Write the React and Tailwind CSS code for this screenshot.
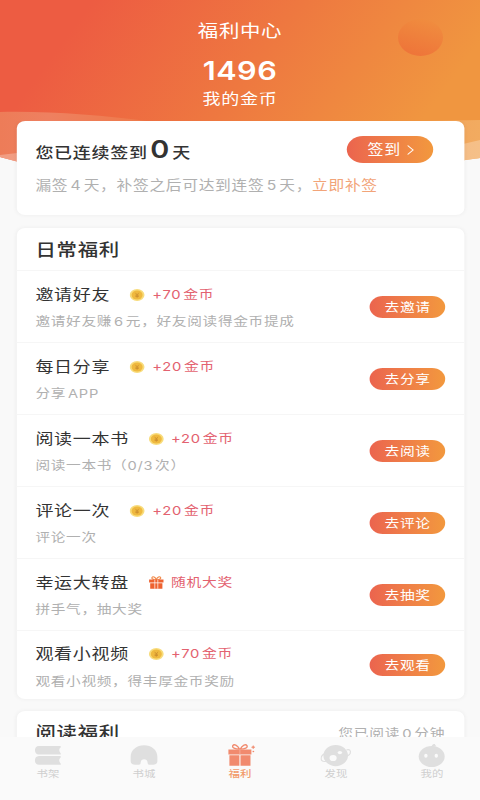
import React from 'react';

const tasks = [
  { title: '邀请好友', reward: '+70 金币', desc: '邀请好友赚 6 元，好友阅读得金币提成', action: '去邀请' },
  { title: '每日分享', reward: '+20 金币', desc: '分享 APP', action: '去分享' },
  { title: '阅读一本书', reward: '+20 金币', desc: '阅读一本书（0/3 次）', action: '去阅读' },
  { title: '评论一次', reward: '+20 金币', desc: '评论一次', action: '去评论' },
  { title: '幸运大转盘', reward: '随机大奖', desc: '拼手气，抽大奖', action: '去抽奖', gift: true },
  { title: '观看小视频', reward: '+70 金币', desc: '观看小视频，得丰厚金币奖励', action: '去观看' },
];

const CoinIcon = () => (
  <svg className="w-[12.5px] h-[12px] shrink-0" viewBox="0 0 15 12" preserveAspectRatio="none">
    <ellipse cx="7.5" cy="6" rx="7.4" ry="5.9" fill="#f8dc7c" />
    <ellipse cx="7.5" cy="6" rx="5.5" ry="4.5" fill="#efb93f" />
    <path d="M5.8 3.8l1.7 2 1.7-2M7.5 5.8v3M5.8 6.2h3.4M5.8 7.5h3.4" fill="none" stroke="#c98a2c" strokeWidth=".7" />
  </svg>
);

const SmallGift = () => (
  <svg className="w-[12.5px] h-[13px] shrink-0" viewBox="0 0 15 13" preserveAspectRatio="none">
    <path d="M7.5 3.6C6.5 1 4 0 3.2 1.4 2.6 2.7 4 3.6 7.5 3.6zM7.5 3.6C8.500 1 11 0 11.800 1.400 12.400 2.700 11 3.600 7.500 3.600z" fill="none" stroke="#f28a4a" strokeWidth="1.1" />
    <path d="M.3 3.600h14.400v3H.3zM1.400 7.200h12.200v5.500H1.400z" fill="#ee6230" />
    <path d="M6 3.600v9.200M9 3.600v9.200" stroke="#fff" strokeWidth=".7" />
  </svg>
);

const tabs = [
  {
    label: '书架',
    icon: (
      <path d="M6.500 4H27.500C29 4 28.600 5.200 27.600 6 26.600 7.200 26.600 9 27.700 10.500 28.600 11.500 29 12.500 27.500 12.500H6.500C1.200 12.500 1.200 4 6.500 4zM6.500 14H27.500C29 14 28.600 15.200 27.600 16.200 26.400 17.700 26.600 19.200 27.700 20.700 28.600 21.700 29 22.800 27.500 22.800H6.500C1.200 22.800 1.200 14 6.500 14z" fill="#dfdfdf" />
    ),
  },
  {
    label: '书城',
    icon: (
      <path d="M2.300 14.500C2.300 8 8.500 3.200 15.700 3.200S29 8 29 14.500V19C29 21.500 27.200 22.800 24.800 22.800H21C19.600 22.800 19.400 22 19.200 20.600 19 18.300 17.600 17.300 15.700 17.300S12.500 18.300 12.300 20.600C12.100 22 11.800 22.800 10.400 22.800H6.500C4 22.800 2.300 21.500 2.300 19z" fill="#dfdfdf" />
    ),
  },
  {
    label: '福利',
    active: true,
    icon: (
      <g fill="#f18a6e">
        <path d="M15.300 7.200C13 3 9.600 1.700 8.400 3.600 7.400 5.600 10.400 7.200 15.300 7.200zM15.700 7.200C18 3 21.400 1.700 22.600 3.600 23.600 5.600 20.600 7.200 15.700 7.200z" fill="none" stroke="#f18a6e" strokeWidth="1.300" />
        <path d="M4 7.500h23v4.900H4zM5 13.300h10v10.500H5zM16.100 13.300h10v10.500h-10z" />
        <path d="M15.500 7.500v5" stroke="#f8c0b0" strokeWidth=".6" />
        <path d="M28.800 3.400l.6 1.200 1.300.6-1.300.6-.6 1.200-.6-1.200-1.300-.6 1.300-.6zM28.400 9h1.200v1h-1.200z" stroke="#f18a6e" strokeWidth=".3" />
      </g>
    ),
  },
  {
    label: '发现',
    icon: (
      <g>
        <path d="M4.500 11.500C-.5 14-.5 19.500 4 19.500 12 19.500 28 15.500 29.800 11.500 30.800 8.500 29 6.800 26 8" fill="none" stroke="#dfdfdf" strokeWidth="1.200" />
        <ellipse cx="15.300" cy="13.600" rx="12.300" ry="10.600" fill="#dfdfdf" />
        <ellipse cx="12.700" cy="16" rx="3.600" ry="3.100" fill="#fafafa" />
        <ellipse cx="19.500" cy="10.600" rx="2.200" ry="1.700" fill="#fafafa" />
      </g>
    ),
  },
  {
    label: '我的',
    icon: (
      <g>
        <path d="M15.500 5C16 3.400 17 2.200 18 2.600L17.200 4 19.600 3.800" fill="none" stroke="#dfdfdf" strokeWidth="1.200" />
        <ellipse cx="15.300" cy="14.500" rx="13" ry="10.600" fill="#dfdfdf" />
        <ellipse cx="9.500" cy="13.800" rx="1.700" ry="2" fill="#fafafa" />
        <ellipse cx="19.900" cy="13.800" rx="1.700" ry="2" fill="#fafafa" />
      </g>
    ),
  },
];

const HeaderBackground = () => (
  <svg className="absolute inset-x-0 top-0 w-full h-[165px]" viewBox="0 0 480 165" preserveAspectRatio="none">
    <defs>
      <linearGradient id="sky" gradientUnits="userSpaceOnUse" x1="75" y1="25" x2="345" y2="225">
        <stop offset="0" stopColor="#ed5c42" />
        <stop offset=".5" stopColor="#ee7840" />
        <stop offset="1" stopColor="#f09640" />
      </linearGradient>
      <linearGradient id="ball" x1=".35" y1="1" x2=".75" y2="0">
        <stop offset="0" stopColor="#ee7439" />
        <stop offset="1" stopColor="#f08d3f" />
      </linearGradient>
      <linearGradient id="wave" x1="0" y1="0" x2="1" y2="0">
        <stop offset="0" stopColor="#ed7c58" />
        <stop offset=".1" stopColor="#ee8060" />
        <stop offset=".3" stopColor="#ee7a4a" />
        <stop offset="1" stopColor="#f2ab60" />
      </linearGradient>
    </defs>
    <path d="M0 0H480V158L430 165H30L0 157z" fill="url(#sky)" />
    <ellipse cx="420.500" cy="37.500" rx="22.500" ry="18.500" fill="url(#ball)" />
    <path d="M0 112C50 111 100 115 150 121.500H400L480 120V158L430 165H30L0 157z" fill="url(#wave)" />
    <path d="M0 155L17 153V162L0 157zM463 144L480 140V158L463 162z" fill="#fff" opacity=".25" />
  </svg>
);

const App = () => {
  return (
    <div className="w-[480px] h-[800px] overflow-hidden bg-[#f9f9f9]" lang="zh-CN">
      {/* the page is 400 units wide and stretched to fill the screen */}
      <div className="relative flex flex-col w-[400px] h-[800px] overflow-hidden origin-left scale-x-[1.2] tracking-[0.6px] [word-spacing:-2.4px] font-['Inter','Noto_Sans_CJK_SC',sans-serif]">
        <HeaderBackground />

        <header className="relative h-[121px] shrink-0 pt-[19px] flex flex-col items-center text-white">
          <h1 className="text-[17px] leading-[24px]">福利中心</h1>
          <div className="mt-[13px] text-[25.5px] leading-[30px] font-semibold tracking-[0.4px]">1496</div>
          <div className="mt-[3px] text-[15px] leading-[20px]">我的金币</div>
        </header>

        <main className="relative flex-1 min-h-0 overflow-hidden px-[13.5px]">
          <section className="h-[94px] rounded-[7px] bg-white shadow-[0_0_4px_rgba(0,0,0,0.05)] pl-4 pr-[25.5px]">
            <div className="flex items-center justify-between pt-[15px] h-[42px]">
              <div className="flex items-baseline pt-[3px] text-[15px] leading-[26px] font-medium text-[#333]">
                您已连续签到
                <span className="mx-[2px] text-[24px] font-semibold">0</span>
                天
              </div>
              <button type="button" className="flex items-center justify-center gap-[5px] w-[72.5px] h-[27px] rounded-full bg-linear-to-r from-[#eb644e] to-[#f2983d] pl-[2px] text-[13.3px] text-white">
                签到
                <svg className="w-[6px] h-[10px]" viewBox="0 0 6 10">
                  <path d="M.7.500L5.200 5 .7 9.500" fill="none" stroke="#fff" />
                </svg>
              </button>
            </div>
            <p className="mt-[12px] text-[13.1px] leading-[20px] text-[#b0b0b0] whitespace-nowrap">
              漏签 4 天，补签之后可达到连签 5 天，<span className="text-[#f2a479]">立即补签</span>
            </p>
          </section>

          <section className="mt-[13px] h-[471px] rounded-[7px] bg-white shadow-[0_0_4px_rgba(0,0,0,0.05)]">
            <h2 className="h-[43px] pl-4 pt-px text-[17px] leading-[43px] font-medium text-[#333] border-b border-[#f6f6f6]">日常福利</h2>
            {tasks.map(({ title, reward, desc, action, gift }) => (
              <div key={title} className="group flex items-center justify-between h-[72px] pl-4 pr-[15.3px] border-b border-[#f6f6f6] last:h-[68px] last:border-0">
                <div className="pt-[3px] group-last:pt-[5px]">
                  <div className="flex items-center h-[26px] whitespace-nowrap">
                    <span className="text-[15px] text-[#333]">{title}</span>
                    <span className="flex w-[12.5px] ml-[16.5px] mr-[6px] mb-px">{gift ? <SmallGift /> : <CoinIcon />}</span>
                    <span className="text-[12.3px] text-[#e36270]">{reward}</span>
                  </div>
                  <p className="h-[26px] text-[12.2px] leading-[27px] text-[#b0b0b0] whitespace-nowrap">{desc}</p>
                </div>
                <button type="button" className="w-[63px] h-[22px] pt-px rounded-full bg-linear-to-r from-[#eb644e] to-[#f2983d] text-[12.3px] leading-[21px] text-white">
                  {action}
                </button>
              </div>
            ))}
          </section>

          <section className="mt-[12px] h-[80px] rounded-[7px] bg-white shadow-[0_0_4px_rgba(0,0,0,0.05)] pl-4 pr-[15.5px] flex justify-between">
            <h2 className="pt-px text-[17px] leading-[43px] font-medium text-[#333]">阅读福利</h2>
            <span className="text-[12.3px] leading-[45px] text-[#b0b0b0]">您已阅读 0 分钟</span>
          </section>
        </main>

        <nav className="relative grid grid-cols-5 h-[63px] shrink-0 pt-[5px] bg-[#fafafa]">
          {tabs.map(({ label, icon, active }) => (
            <div key={label} className="flex flex-col items-center">
              <svg className="w-[26.67px] h-[26px]" viewBox="0 0 32 26" preserveAspectRatio="none">{icon}</svg>
              <span className={active ? 'text-[9.5px] leading-[12px] tracking-[0.1px] font-medium text-[#f29a6c]' : 'text-[9.5px] leading-[12px] tracking-[0.1px] text-[#cfcfcf]'}>
                {label}
              </span>
            </div>
          ))}
        </nav>
      </div>
    </div>
  );
};

export default App;
